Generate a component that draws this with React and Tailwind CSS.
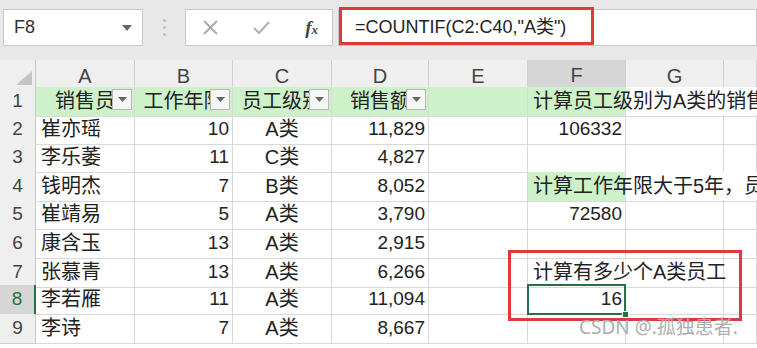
import React from "react";

const GRID = "grid grid-cols-[36px_99px_98px_99px_97px_99px_98px_98px_1fr]";
const LINE = "border-r border-b border-[#d9d9d9]";

const people = [
  { n: 2, h: "h-[28px]", name: "崔亦瑶", years: 10, grade: "A类", sales: "11,829" },
  { n: 3, h: "h-[29px]", name: "李乐萎", years: 11, grade: "C类", sales: "4,827" },
  { n: 4, h: "h-[28px]", name: "钱明杰", years: 7, grade: "B类", sales: "8,052" },
  { n: 5, h: "h-[29px]", name: "崔靖易", years: 5, grade: "A类", sales: "3,790" },
  { n: 6, h: "h-[28px]", name: "康含玉", years: 13, grade: "A类", sales: "2,915" },
  { n: 7, h: "h-[28px]", name: "张慕青", years: 13, grade: "A类", sales: "6,266" },
  { n: 8, h: "h-[29px]", name: "李若雁", years: 11, grade: "A类", sales: "11,094" },
  { n: 9, h: "h-[24px]", name: "李诗", years: 7, grade: "A类", sales: "8,667" },
];

function FilterButton() {
  return (
    <div className="absolute right-[2px] top-[2px] w-[20px] h-[21px] bg-[#f6f6f6] border border-[#b8b8b8] flex items-center justify-center">
      <svg width="9" height="5" viewBox="0 0 9 5">
        <polygon points="0,0 9,0 4.5,5" fill="#666" />
      </svg>
    </div>
  );
}

function RowHead({ n, active }) {
  return (
    <div
      className={`flex items-center justify-center text-[19px] border-b border-[#d0d0d0] ${
        active
          ? "bg-[#d6d6d6] text-[#217346] border-r-2 border-r-[#217346]"
          : "bg-[#efefef] text-[#444] border-r border-r-[#c8c8c8]"
      }`}
    >
      {n}
    </div>
  );
}

function Text({ children, align = "left", className = "" }) {
  const al =
    align === "right" ? "justify-end pr-[3px]" : align === "center" ? "justify-center" : "justify-start pl-[5px]";
  return (
    <div className={`flex items-center whitespace-nowrap overflow-hidden ${al} ${LINE} ${className}`}>
      {children}
    </div>
  );
}

function HeaderCell({ children }) {
  return (
    <div className={`relative flex items-center justify-center whitespace-nowrap overflow-hidden bg-[#cdf2c9] ${LINE}`}>
      {children}
      <FilterButton />
    </div>
  );
}

function FGH({ n }) {
  if (n === 2 || n === 5) {
    return (
      <>
        <Text align="right" className="text-[19px]">{n === 2 ? "106332" : "72580"}</Text>
        <Text />
        <Text />
      </>
    );
  }
  if (n === 4) {
    return (
      <div className="col-span-3 flex items-center whitespace-nowrap overflow-hidden pl-[5px] border-b border-[#d9d9d9] bg-[linear-gradient(to_right,#cdf2c9_98px,#ffffff_98px)]">
        计算工作年限大于5年，员工的销售额之和
      </div>
    );
  }
  if (n === 7) {
    return (
      <>
        <div className="col-span-2 flex items-center whitespace-nowrap pl-[5px] border-r border-b border-[#d9d9d9]">
          计算有多少个A类员工
        </div>
        <Text />
      </>
    );
  }
  if (n === 8) {
    return (
      <>
        <div className={`relative flex items-center justify-end pr-[3px] text-[19px] ${LINE}`}>
          16
          <div className="absolute -left-px -top-px -right-px -bottom-px border-2 border-[#217346]" />
          <div className="absolute -right-[4px] -bottom-[4px] w-[7px] h-[7px] bg-[#217346] border border-white" />
        </div>
        <Text />
        <Text />
      </>
    );
  }
  return (
    <>
      <Text />
      <Text />
      <Text />
    </>
  );
}

export default function App() {
  return (
    <div className="relative w-[757px] h-[348px] overflow-hidden bg-white text-[#222] font-['Liberation_Sans','Noto_Sans_CJK_SC',sans-serif]">
      {/* formula bar */}
      <div className="flex items-start h-[60px] pt-[9px] bg-[#e8e8e8]">
        <div className="ml-[3px] w-[140px] h-[37px] bg-white border border-[#c8c8c8] flex items-center justify-between pl-[10px] pr-[10px]">
          <span className="text-[18px] text-[#333]">F8</span>
          <svg width="10" height="6" viewBox="0 0 10 6">
            <polygon points="0,0 10,0 5,6" fill="#666" />
          </svg>
        </div>
        <div className="w-[42px] h-[37px] flex flex-col items-center justify-center gap-[4px]">
          <span className="w-[3px] h-[3px] rounded-full bg-[#bdbdbd]" />
          <span className="w-[3px] h-[3px] rounded-full bg-[#bdbdbd]" />
          <span className="w-[3px] h-[3px] rounded-full bg-[#bdbdbd]" />
        </div>
        <div className="w-[148px] h-[37px] bg-white border border-[#c8c8c8] flex items-center pl-[17px] pr-[14px] justify-between">
          <svg width="15" height="15" viewBox="0 0 15 15">
            <path d="M1 1 L14 14 M14 1 L1 14" stroke="#a8a8a8" strokeWidth="1.8" fill="none" />
          </svg>
          <svg width="17" height="14" viewBox="0 0 17 14">
            <path d="M1 7 L6 12 L16 1" stroke="#b0b0b0" strokeWidth="2" fill="none" />
          </svg>
          <span className="font-['Liberation_Serif',serif] italic font-bold text-[19px] text-[#444] leading-none">
            f<span className="text-[13px]">x</span>
          </span>
        </div>
        <div className="relative ml-[5px] flex-1 h-[37px] bg-white border border-[#c8c8c8] flex items-center pl-[16px] text-[18px]">
          =COUNTIF(C2:C40,"A类")
          <div className="absolute left-[0px] -top-[3px] w-[255px] h-[38px] border-[3px] border-[#e0393d]" />
        </div>
      </div>

      {/* sheet */}
      <div className="relative text-[20px]">
        {/* column headers */}
        <div className={`${GRID} h-[27px] bg-[#efefef] text-[#444]`}>
          <div className="flex items-end justify-end pr-[3px] pb-[6px] border-r border-b border-[#c8c8c8]">
            <svg width="16" height="14" viewBox="0 0 16 14">
              <polygon points="16,0 16,14 0,14" fill="#c4c4c4" />
            </svg>
          </div>
          {["A", "B", "C", "D", "E", "F", "G", ""].map((c) => (
            <div
              key={c || "H"}
              className={`flex items-center justify-center border-r border-[#d0d0d0] ${
                c === "F" ? "bg-[#d6d6d6] border-b-2 border-b-[#217346]" : "border-b border-b-[#c8c8c8]"
              }`}
            >
              {c}
            </div>
          ))}
        </div>

        {/* row 1 */}
        <div className={`${GRID} h-[28px]`}>
          <RowHead n={1} />
          <HeaderCell>销售员</HeaderCell>
          <HeaderCell>工作年限</HeaderCell>
          <HeaderCell>员工级别</HeaderCell>
          <HeaderCell>销售额</HeaderCell>
          <div className={`bg-[#cdf2c9] ${LINE}`} />
          <div className="col-span-3 flex items-center whitespace-nowrap overflow-hidden pl-[5px] border-b border-[#d9d9d9] bg-[linear-gradient(to_right,#cdf2c9_98px,#ffffff_98px)]">
            计算员工级别为A类的销售额之和
          </div>
        </div>

        {people.map((p) => (
          <div key={p.n} className={`${GRID} ${p.h}`}>
            <RowHead n={p.n} active={p.n === 8} />
            <Text>{p.name}</Text>
            <Text align="right" className="text-[19px]">{p.years}</Text>
            <Text align="center">{p.grade}</Text>
            <Text align="right" className="text-[19px]">{p.sales}</Text>
            <Text />
            <FGH n={p.n} />
          </div>
        ))}

        <div className="absolute left-[508px] top-[190px] w-[234px] h-[71px] border-[3px] border-[#e0393d]" />
      </div>

      <div className="absolute left-[579px] top-[313px] text-[19px] text-[#adadad] font-['Noto_Sans','Noto_Sans_CJK_SC',sans-serif] whitespace-nowrap">
        CSDN @.孤独患者.
      </div>
    </div>
  );
}
